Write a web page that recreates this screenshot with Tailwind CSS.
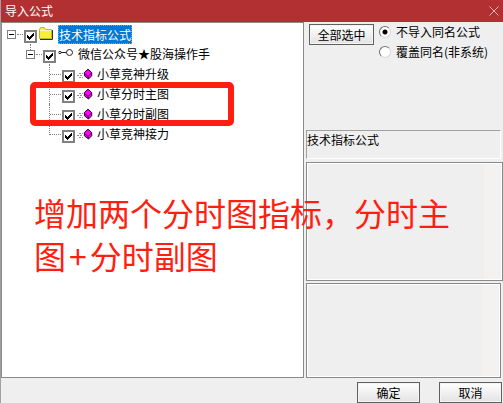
<!DOCTYPE html>
<html lang="zh-CN">
<head>
    <meta charset="UTF-8">
    <meta name="viewport" content="width=device-width, initial-scale=1.0">
    <title>导入公式</title>
    <script src="https://cdn.jsdelivr.net/npm/@tailwindcss/browser@4"></script>
</head>
<body class="relative flex h-screen flex-col overflow-hidden border-l border-[#a0a0a0] bg-[#efefef] font-['Noto_Sans_CJK_SC',sans-serif] text-xs leading-5 text-black">

<!-- shared icons -->
<svg class="hidden">
    <symbol id="check" viewBox="0 0 9 9">
        <path d="M1 3h1v1h1v1h1v-1h1v-1h1v-1h1v-1h1v3h-1v1h-1v1h-1v1h-1v1h-1v-1h-1v-1h-1z" fill="#000"/>
    </symbol>
    <symbol id="gem" viewBox="0 0 16 12">
        <path d="M2 5.5h4M0 7.5h6M2 9.5h4" stroke="#909090" stroke-dasharray="2 1"/>
        <path d="M11 1.2l3.7 3.3v3.3L11.5 11 7.4 7.8V4.5z" fill="#f0f" stroke="#200020"/>
        <path d="M7.5 5.5l3.5 3 3.5-3.5M11.3 8.5V11" stroke="#500050" fill="none"/>
    </symbol>
</svg>

<header class="-ml-px flex h-[22px] shrink-0 items-center justify-between bg-[#b22f32] pr-1 pl-[5px] text-white">
    <h1>导入公式</h1>
    <button type="button" aria-label="关闭">
        <svg class="size-[10px]" viewBox="0 0 10 10"><path d="M.5.5l9 9M9.5.5l-9 9" stroke="#e5b5b6" fill="none"/></svg>
    </button>
</header>

<main class="flex min-h-0 flex-1">
    <ul class="min-w-0 flex-1 border border-[#8a8a8a] bg-white pt-px whitespace-nowrap">
        <li class="flex h-5 pl-[5px]">
            <button type="button" aria-label="折叠" class="mt-[6px] flex size-[9px] items-center justify-center border border-[#808080]"><span class="h-px w-[5px] bg-black"></span></button>
            <span class="mt-[10px] ml-px h-px w-[6px] border-t border-dotted border-[#808080]"></span>
            <label class="flex">
                <span class="relative mt-[6px] ml-px size-[13px]">
                    <input type="checkbox" checked class="peer block size-[13px] appearance-none border-2 border-[#808080] bg-white">
                    <svg class="pointer-events-none absolute top-[2px] left-[2px] hidden size-[9px] peer-checked:block"><use href="#check"/></svg>
                </span>
                <svg class="mt-[2px] ml-px h-[14px] w-[16px]" viewBox="0 0 16 14">
                    <path d="M1.5 12.5v-9l1-2h4l1 2h6v9z" fill="#f6f03a" stroke="#c0b820"/>
                    <path d="M2 4.5h11" stroke="#ffffb0"/>
                    <path d="M14.5 4v9.5H2" stroke="#333" fill="none"/>
                </svg>
                <span class="mt-px ml-[4px] h-[19px] border border-dotted border-[#ff8728] bg-[#0078d7] leading-[17px] text-white">技术指标公式</span>
            </label>
        </li>
        <li class="flex h-5 pl-[24px]">
            <span class="flex w-[9px] flex-col items-center">
                <span class="h-[6px] w-px border-l border-dotted border-[#808080]"></span>
                <button type="button" aria-label="折叠" class="flex size-[9px] items-center justify-center border border-[#808080]"><span class="h-px w-[5px] bg-black"></span></button>
            </span>
            <span class="mt-[10px] ml-px h-px w-[6px] border-t border-dotted border-[#808080]"></span>
            <label class="flex">
                <span class="relative mt-[6px] ml-px size-[13px]">
                    <input type="checkbox" checked class="peer block size-[13px] appearance-none border-2 border-[#808080] bg-white">
                    <svg class="pointer-events-none absolute top-[2px] left-[2px] hidden size-[9px] peer-checked:block"><use href="#check"/></svg>
                </span>
                <svg class="mt-[4px] ml-[2px] h-[9px] w-[15px]" viewBox="0 0 15 9" fill="none" stroke="#222">
                    <circle cx="11.5" cy="4.5" r="3"/>
                    <path d="M3 4.5h5.5"/>
                    <circle cx="2" cy="4.5" r="1.2"/>
                </svg>
                <span class="ml-[5px]">微信公众号★股海操作手</span>
            </label>
        </li>
        <li class="flex h-5 pl-[47px]">
            <span class="w-[12px] border-l border-dotted border-[#808080]"><span class="block h-[11px] border-b border-dotted border-[#808080]"></span></span>
            <label class="flex">
                <span class="relative mt-[6px] ml-px size-[13px]">
                    <input type="checkbox" checked class="peer block size-[13px] appearance-none border-2 border-[#808080] bg-white">
                    <svg class="pointer-events-none absolute top-[2px] left-[2px] hidden size-[9px] peer-checked:block"><use href="#check"/></svg>
                </span>
                <svg class="mt-[4px] ml-[2px] h-[12px] w-[16px]"><use href="#gem"/></svg>
                <span class="ml-[4px]">小草竞神升级</span>
            </label>
        </li>
        <li class="flex h-5 pl-[47px]">
            <span class="w-[12px] border-l border-dotted border-[#808080]"><span class="block h-[11px] border-b border-dotted border-[#808080]"></span></span>
            <label class="flex">
                <span class="relative mt-[6px] ml-px size-[13px]">
                    <input type="checkbox" checked class="peer block size-[13px] appearance-none border-2 border-[#808080] bg-white">
                    <svg class="pointer-events-none absolute top-[2px] left-[2px] hidden size-[9px] peer-checked:block"><use href="#check"/></svg>
                </span>
                <svg class="mt-[4px] ml-[2px] h-[12px] w-[16px]"><use href="#gem"/></svg>
                <span class="ml-[4px]">小草分时主图</span>
            </label>
        </li>
        <li class="flex h-5 pl-[47px]">
            <span class="w-[12px] border-l border-dotted border-[#808080]"><span class="block h-[11px] border-b border-dotted border-[#808080]"></span></span>
            <label class="flex">
                <span class="relative mt-[6px] ml-px size-[13px]">
                    <input type="checkbox" checked class="peer block size-[13px] appearance-none border-2 border-[#808080] bg-white">
                    <svg class="pointer-events-none absolute top-[2px] left-[2px] hidden size-[9px] peer-checked:block"><use href="#check"/></svg>
                </span>
                <svg class="mt-[4px] ml-[2px] h-[12px] w-[16px]"><use href="#gem"/></svg>
                <span class="ml-[4px]">小草分时副图</span>
            </label>
        </li>
        <li class="flex h-5 pl-[47px]">
            <span class="h-[11px] w-[12px] border-b border-l border-dotted border-[#808080]"></span>
            <label class="flex">
                <span class="relative mt-[6px] ml-px size-[13px]">
                    <input type="checkbox" checked class="peer block size-[13px] appearance-none border-2 border-[#808080] bg-white">
                    <svg class="pointer-events-none absolute top-[2px] left-[2px] hidden size-[9px] peer-checked:block"><use href="#check"/></svg>
                </span>
                <svg class="mt-[4px] ml-[2px] h-[12px] w-[16px]"><use href="#gem"/></svg>
                <span class="ml-[4px]">小草竞神接力</span>
            </label>
        </li>
    </ul>

    <section class="flex w-[199px] shrink-0 flex-col pl-[2px]">
        <div class="flex flex-1 items-start pt-[2px] pl-[3px]">
            <button type="button" class="h-[21px] w-[65px] border border-[#606060] bg-linear-to-b from-white to-[#e2e2e2] leading-[19px] shadow-[inset_0_0_0_1px_#f4f4f4]">全部选中</button>
            <div class="-mt-[2px] ml-[5px] flex flex-col">
                <label class="flex h-5 items-center gap-[5px]">
                    <input type="radio" name="dup" checked class="size-[12px] appearance-none rounded-full border border-t-[#707070] border-r-[#d8d8d8] border-b-[#d8d8d8] border-l-[#707070] bg-white checked:bg-[radial-gradient(circle,#000_2px,#fff_3px)]">
                    不导入同名公式
                </label>
                <label class="flex h-5 items-center gap-[5px]">
                    <input type="radio" name="dup" class="size-[12px] appearance-none rounded-full border border-t-[#707070] border-r-[#d8d8d8] border-b-[#d8d8d8] border-l-[#707070] bg-white checked:bg-[radial-gradient(circle,#000_2px,#fff_3px)]">
                    覆盖同名(非系统)
                </label>
            </div>
        </div>
        <p class="mr-[2px] h-[29px] border border-t-[#a0a0a0] border-r-white border-b-white border-l-[#a0a0a0] leading-[18px]">技术指标公式</p>
        <div class="mt-[3px] flex h-[119px] border border-[#8a8a8a]">
            <textarea readonly aria-label="公式说明" class="min-w-0 flex-1 resize-none overflow-hidden border border-r-0 border-white outline-none"></textarea>
            <span class="w-[18px] border border-l-0 border-white bg-[#f4f2f0]"></span>
        </div>
        <div class="mt-[2px] mr-[2px] flex h-[95px] border border-[#8a8a8a]">
            <textarea readonly aria-label="公式内容" class="min-w-0 flex-1 resize-none overflow-hidden border border-r-0 border-white outline-none"></textarea>
            <span class="w-[18px] border border-l-0 border-white bg-[#f4f2f0]"></span>
        </div>
    </section>
</main>

<footer class="flex h-[25px] shrink-0 items-end justify-end gap-[19px] pr-px">
    <button type="button" class="h-[21px] w-[63px] border border-[#606060] bg-linear-to-b from-white to-[#e2e2e2] leading-[19px] shadow-[inset_0_0_0_1px_#f4f4f4]">确定</button>
    <button type="button" class="h-[21px] w-[63px] border border-[#606060] bg-linear-to-b from-white to-[#e2e2e2] leading-[19px] shadow-[inset_0_0_0_1px_#f4f4f4]">取消</button>
</footer>

<!-- red annotation on top of the dialog -->
<div class="pointer-events-none absolute top-[82px] left-[29px] h-[44px] w-[204px] rounded-[5px] border-6 border-[#ff1e10]"></div>
<div class="pointer-events-none absolute top-[191px] left-[33px] text-[32px] leading-[43px] whitespace-nowrap text-[#ff1e10]">
    <p>增加两个分时图指标，分时主</p>
    <p class="flex gap-[3px]"><span>图</span><span>+</span><span>分时副图</span></p>
</div>

</body>
</html>
